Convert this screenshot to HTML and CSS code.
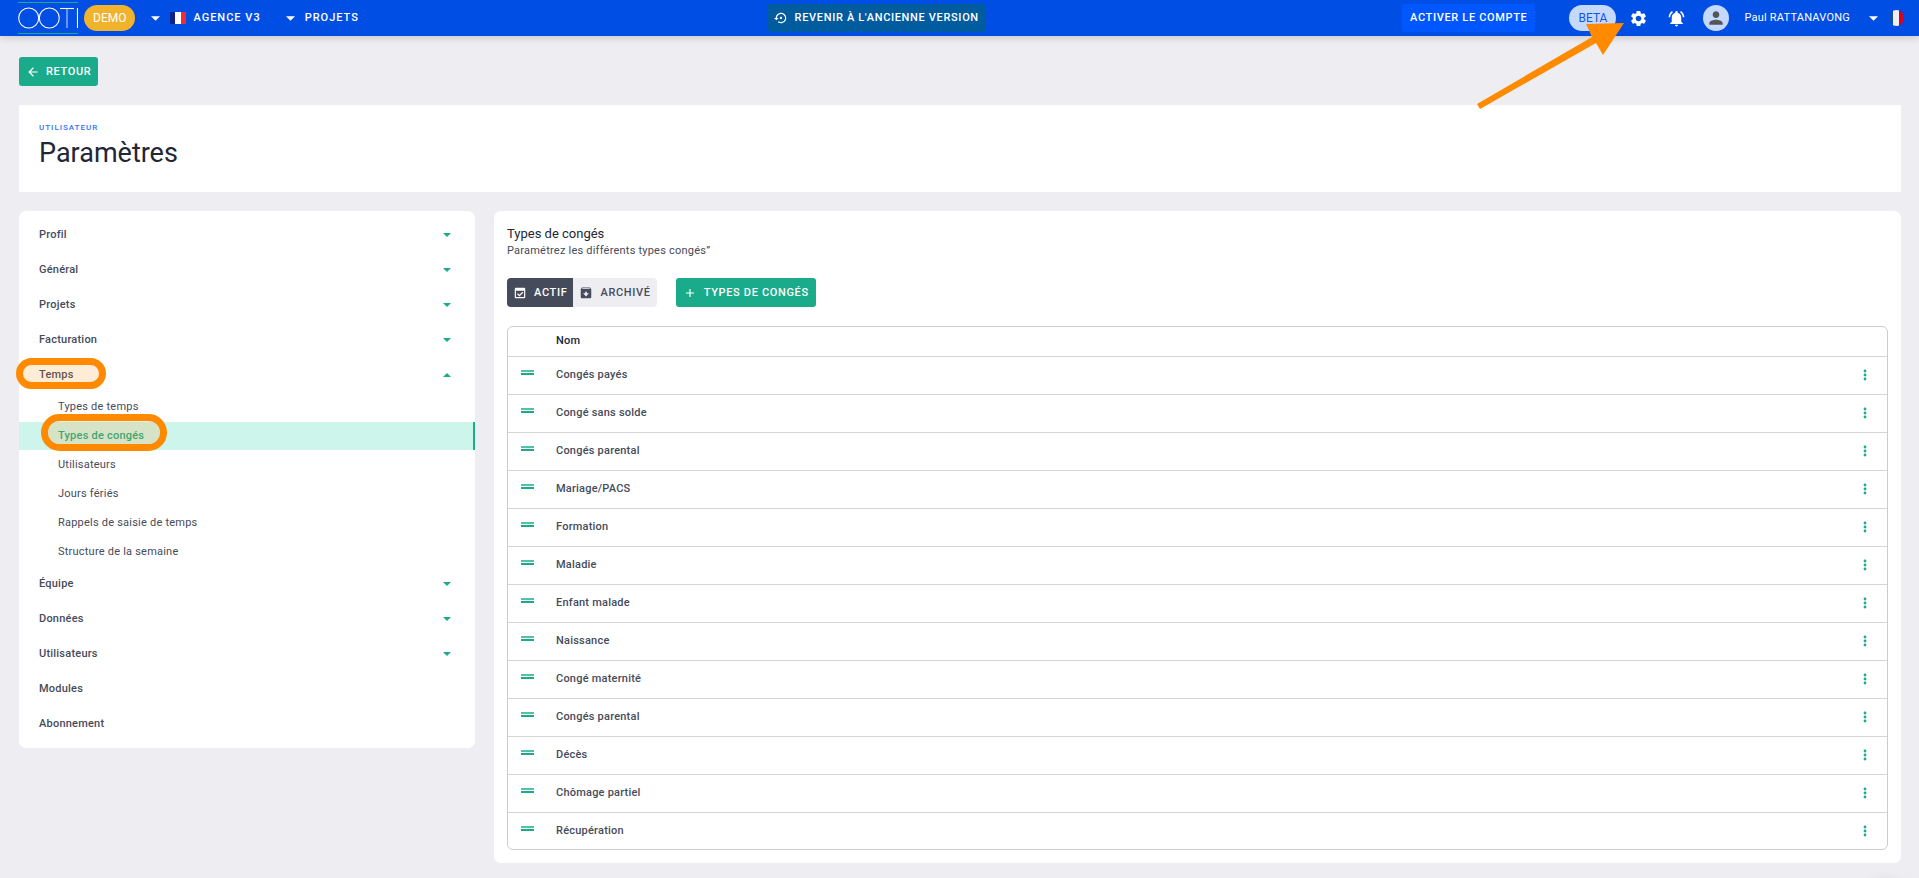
FILE: index.html
```html
<!DOCTYPE html>
<html lang="fr">
<head>
<meta charset="utf-8">
<meta name="viewport" content="width=device-width, initial-scale=1">
<title>OOTI - Paramètres</title>
<link rel="stylesheet" href="styles.css">
</head>
<body>
<svg class="sprite" aria-hidden="true">
  <symbol id="caret" viewBox="0 0 10 5"><path d="M0 0h10L5 5z"/></symbol>
  <symbol id="drag" viewBox="0 0 13 5"><path d="M0 0h13v2H0z" opacity=".75"/><path d="M0 3h13v2H0z"/></symbol>
  <symbol id="dots" viewBox="0 0 4 12"><circle cx="2" cy="2" r="1.4"/><circle cx="2" cy="6" r="1.4"/><circle cx="2" cy="10" r="1.4"/></symbol>
</svg>

<header class="topbar">
  <div class="topbar-left">
    <a href="#" class="logo" aria-label="OOTI">
      <svg width="60" height="32" viewBox="0 0 60 32" fill="none">
        <line x1="0" y1=".5" x2="60" y2=".5" stroke="#1aab8a"/>
        <line x1="0" y1="31.5" x2="60" y2="31.5" stroke="#1aab8a"/>
        <g stroke="#fff" stroke-width="1.1">
          <circle cx="10.7" cy="16" r="10"/>
          <circle cx="31.3" cy="16" r="10"/>
          <line x1="42" y1="6.5" x2="56" y2="6.5"/>
          <line x1="49" y1="6.5" x2="49" y2="26" stroke="#bcd0fa"/>
          <line x1="59.5" y1="6" x2="59.5" y2="26"/>
        </g>
      </svg>
    </a>
    <span class="pill pill-demo">DEMO</span>
    <button class="menu menu-agency" type="button">
      <svg class="caret" width="9" height="5"><use href="#caret"/></svg>
      <svg class="flag" width="16" height="12" viewBox="0 0 16 12"><path fill="#10218b" d="M0 0h5v12H0z"/><path fill="#fff" d="M5 0h6v12H5z"/><path fill="#f02c37" d="M11 0h5v12h-5z"/></svg>
      <span>AGENCE V3</span>
    </button>
    <button class="menu menu-projects" type="button">
      <svg class="caret" width="9" height="5"><use href="#caret"/></svg>
      <span>PROJETS</span>
    </button>
  </div>
  <button class="btn btn-legacy" type="button">
    <svg width="14" height="14" viewBox="0 0 24 24" fill="currentColor"><path d="M14 12c0-1.100-.9-2-2-2s-2 .9-2 2 .9 2 2 2 2-.9 2-2zm-2-9c-4.970 0-9 4.030-9 9H0l4 4 4-4H5c0-3.870 3.130-7 7-7s7 3.130 7 7-3.130 7-7 7c-1.510 0-2.910-.49-4.060-1.300l-1.420 1.440C8.040 20.300 9.940 21 12 21c4.970 0 9-4.030 9-9s-4.030-9-9-9z"/></svg>
    <span>REVENIR À L'ANCIENNE VERSION</span>
  </button>
  <div class="topbar-right">
    <button class="btn btn-activate" type="button">ACTIVER LE COMPTE</button>
    <span class="pill pill-beta">BETA</span>
    <button class="icon-btn" type="button" aria-label="Réglages">
      <svg width="19" height="19" viewBox="0 0 24 24" fill="#fff"><path d="M19.140 12.940c.04-.3.060-.61.060-.94s-.02-.64-.07-.94l2.030-1.580c.18-.14.230-.41.120-.61l-1.920-3.320c-.12-.22-.37-.29-.59-.22l-2.390.96c-.5-.38-1.030-.7-1.620-.94l-.36-2.540c-.04-.24-.24-.41-.48-.41h-3.840c-.24 0-.43.170-.47.410l-.36 2.540c-.59.240-1.130.57-1.620.94l-2.390-.96c-.22-.08-.47 0-.59.220L2.740 8.870c-.12.210-.08.470.12.610l2.030 1.580c-.05.3-.09.630-.09.940s.02.640.07.940l-2.030 1.580c-.18.140-.23.410-.12.610l1.920 3.320c.12.220.37.290.59.220l2.390-.96c.5.380 1.030.7 1.620.94l.36 2.540c.05.240.24.410.48.410h3.840c.24 0 .44-.17.470-.41l.36-2.540c.59-.24 1.130-.56 1.620-.94l2.390.96c.22.080.47 0 .59-.22l1.920-3.320c.12-.22.070-.47-.12-.61l-2.010-1.580zM12 15.600c-1.980 0-3.600-1.620-3.600-3.600s1.620-3.600 3.600-3.600 3.600 1.620 3.600 3.600-1.620 3.600-3.600 3.600z"/></svg>
    </button>
    <button class="icon-btn icon-bell" type="button" aria-label="Notifications">
      <svg width="19" height="19" viewBox="0 0 24 24" fill="#fff"><path d="M7.580 4.080L6.150 2.650C3.750 4.480 2.170 7.300 2.030 10.500h2c.15-2.650 1.510-4.970 3.550-6.420zM19.970 10.500h2c-.15-3.200-1.730-6.020-4.120-7.850l-1.420 1.430c2.020 1.450 3.390 3.770 3.540 6.420zM18 11c0-3.070-1.640-5.640-4.500-6.320V4c0-.83-.67-1.500-1.500-1.500s-1.500.67-1.500 1.500v.68C7.630 5.360 6 7.920 6 11v5l-2 2v1h16v-1l-2-2v-5zM12 22c.14 0 .27-.01.400-.04.650-.14 1.180-.58 1.440-1.180.1-.24.150-.5.150-.78h-4c.01 1.100.9 2 2.010 2z"/></svg>
    </button>
    <button class="user" type="button">
      <span class="avatar"><svg width="20" height="20" viewBox="0 0 24 24" fill="#555"><path d="M12 12c2.210 0 4-1.790 4-4s-1.790-4-4-4-4 1.790-4 4 1.790 4 4 4zm0 2c-2.670 0-8 1.340-8 4v2h16v-2c0-2.660-5.330-4-8-4z"/></svg></span>
      <span class="user-name">Paul RATTANAVONG</span>
      <svg class="caret" width="9" height="5"><use href="#caret"/></svg>
    </button>
    <button class="lang" type="button" aria-label="Français"></button>
  </div>
  <svg class="arrow" width="148" height="88" viewBox="0 0 148 88" fill="#ff8a00" aria-hidden="true"><path d="M0 82L115 15 109 2 147 1 126 33 119 21 3 87z"/></svg>
</header>

<main class="page">
  <a href="#" class="btn btn-green btn-back">
    <svg width="14" height="14" viewBox="0 0 24 24" fill="currentColor"><path d="M20 11H7.830l5.590-5.590L12 4l-8 8 8 8 1.410-1.410L7.830 13H20v-2z"/></svg>
    <span>RETOUR</span>
  </a>

  <section class="title-card">
    <p class="overline">UTILISATEUR</p>
    <h1>Paramètres</h1>
  </section>

  <div class="columns">
    <nav class="sidebar" aria-label="Paramètres">
      <button class="group" type="button">Profil<svg class="caret" width="8" height="4"><use href="#caret"/></svg></button>
      <button class="group" type="button">Général<svg class="caret" width="8" height="4"><use href="#caret"/></svg></button>
      <button class="group" type="button">Projets<svg class="caret" width="8" height="4"><use href="#caret"/></svg></button>
      <button class="group" type="button">Facturation<svg class="caret" width="8" height="4"><use href="#caret"/></svg></button>
      <button class="group" type="button" aria-expanded="true">Temps<svg class="caret caret-up" width="8" height="4"><use href="#caret"/></svg><span class="ring ring-group"></span></button>
      <div class="sub">
        <a href="#">Types de temps</a>
        <a href="#" class="active" aria-current="page">Types de congés<span class="ring ring-sub"></span></a>
        <a href="#">Utilisateurs</a>
        <a href="#">Jours fériés</a>
        <a href="#">Rappels de saisie de temps</a>
        <a href="#">Structure de la semaine</a>
      </div>
      <button class="group" type="button">Équipe<svg class="caret" width="8" height="4"><use href="#caret"/></svg></button>
      <button class="group" type="button">Données<svg class="caret" width="8" height="4"><use href="#caret"/></svg></button>
      <button class="group" type="button">Utilisateurs<svg class="caret" width="8" height="4"><use href="#caret"/></svg></button>
      <a href="#" class="group">Modules</a>
      <a href="#" class="group">Abonnement</a>
    </nav>

    <section class="panel">
      <h2>Types de congés</h2>
      <p class="hint">Paramétrez les différents types congés”</p>
      <div class="actions">
        <div class="toggle">
          <button class="btn btn-dark" type="button">
            <svg width="14" height="14" viewBox="0 0 24 24" fill="currentColor"><path fill-rule="evenodd" d="M5 3h14a2 2 0 0 1 2 2v14a2 2 0 0 1-2 2H5a2 2 0 0 1-2-2V5a2 2 0 0 1 2-2zm0 5v11h14V8zm12.500 3.500L11 18l-4-4 1.500-1.500L11 15l5-5z"/></svg>
            <span>ACTIF</span>
          </button>
          <button class="btn btn-light" type="button">
            <svg width="14" height="14" viewBox="0 0 24 24" fill="currentColor"><path fill-rule="evenodd" d="M5 2.500h14l2 3V19a2 2 0 0 1-2 2H5a2 2 0 0 1-2-2V5.500zM5 5h14l-1-1H6zm5.500 5v2.500H7l5 5.500 5-5.500h-3.500V10z"/></svg>
            <span>ARCHIVÉ</span>
          </button>
        </div>
        <button class="btn btn-green btn-add" type="button">
          <svg width="14" height="14" viewBox="0 0 24 24" fill="currentColor"><path d="M19 13h-6v6h-2v-6H5v-2h6V5h2v6h6v2z"/></svg>
          <span>TYPES DE CONGÉS</span>
        </button>
      </div>
      <table class="types">
        <thead><tr><th class="col-drag"></th><th>Nom</th><th class="col-menu"></th></tr></thead>
        <tbody id="rows"></tbody>
      </table>
    </section>
  </div>
</main>
<div class="fab-shadow" aria-hidden="true"></div>
<script src="rows.js"></script>
</body>
</html>
```
FILE: styles.css
```css
* { box-sizing: border-box; }

body {
  margin: 0;
  min-height: 100vh;
  background: #eeedf2;
  color: #464b5b;
  font: 400 11px/16px Roboto, "Liberation Sans", sans-serif;
  letter-spacing: 0.02em;
}

h1, h2, p { margin: 0; font-weight: 400; }
a { color: inherit; text-decoration: none; }
button { border: 0; padding: 0; background: none; color: inherit; font: inherit; letter-spacing: inherit; cursor: pointer; }
svg { display: block; flex: none; }
.sprite { position: absolute; width: 0; height: 0; }
.caret { fill: currentColor; }

/* Top bar */
.topbar {
  position: relative;
  display: grid;
  grid-template-columns: 40% auto 1fr;
  align-items: center;
  height: 36px;
  background: #004ee3;
  color: #fff;
  box-shadow: 0 1px 8px rgba(0, 0, 0, 0.2);
}
.topbar-left, .topbar-right { display: flex; align-items: center; }
.topbar-left { padding-left: 18px; }
.topbar-right { justify-content: flex-end; padding-right: 15px; }
.logo { height: 34px; }
.logo svg { margin-top: 1px; }
.pill {
  display: flex;
  align-items: center;
  height: 26px;
  border-radius: 13px;
  letter-spacing: 0;
}
.pill-demo { margin-left: 6px; padding: 0 9px; background: #f1b32b; font-size: 12px; }
.pill-beta { margin-left: 34px; padding: 0 9px; background: #c5d9ff; color: #0f55e6; font-size: 12px; }
.menu { display: flex; align-items: center; font-weight: 500; letter-spacing: 1px; }
.menu-agency { margin-left: 16px; }
.menu-agency .flag { margin: 0 7px 0 10px; }
.menu-projects { margin-left: 25px; }
.menu-projects .caret { margin-right: 10px; }

.btn {
  display: inline-flex;
  align-items: center;
  gap: 7px;
  height: 29px;
  border-radius: 3px;
  font-size: 11px;
  font-weight: 500;
  letter-spacing: 0.06em;
  white-space: nowrap;
}
.btn-legacy { height: 28px; padding: 0 7px 0 6px; background: #005b9f; }
.btn-activate { height: 28px; padding: 0 8px; background: #0056ff; }
.icon-btn { margin-left: 13px; }
.icon-bell { margin-left: 19px; }
.user { display: flex; align-items: center; margin-left: 17px; }
.avatar {
  display: grid;
  place-items: center;
  width: 26px;
  height: 26px;
  border-radius: 50%;
  background: #c5d9ff;
}
.user-name { margin: 0 19px 0 15px; }
.lang {
  width: 15px;
  height: 16px;
  margin-left: 11px;
  border-radius: 50%;
  background: linear-gradient(90deg, #1450a8 0 4px, #f0f0f0 4px 10px, #d80027 10px);
}
.arrow { position: absolute; top: 22px; right: 294px; z-index: 2; pointer-events: none; }

/* Page */
.page { padding: 21px 18px 15px 19px; }
.btn-green { background: #1aab8a; color: #fff; }
.btn-back, .btn-add { padding: 0 7px; }
.btn-back { gap: 6px; }
.title-card { margin-top: 19px; padding: 16px 20px 21px; background: #fff; }
.overline { color: #2f74ff; font-size: 8px; font-weight: 500; line-height: 14px; letter-spacing: 1px; }
h1 { color: #232634; font-size: 27px; line-height: 36px; letter-spacing: 0; }

.columns {
  display: grid;
  grid-template-columns: 456fr 1407fr;
  gap: 19px;
  align-items: start;
  margin-top: 19px;
}
.sidebar, .panel { background: #fff; border-radius: 7px; }

/* Settings navigation */
.sidebar { padding: 6px 0 7px; }
.group {
  position: relative;
  display: flex;
  align-items: center;
  justify-content: space-between;
  width: 100%;
  height: 35px;
  padding: 0 24px 0 20px;
  font-weight: 500;
}
.group .caret { color: #1aab8a; }
.caret-up { transform: rotate(180deg); }
.sub { display: grid; gap: 1px; padding-top: 1px; }
.sub a { position: relative; display: flex; align-items: center; height: 28px; padding-left: 39px; }
.sub .active {
  background: #cef5ec;
  border-right: 2px solid #1aab8a;
  color: #1aab8a;
  font-weight: 500;
}
.ring {
  position: absolute;
  z-index: 1;
  border: 7px solid #ff8a00;
  border-radius: 20px;
  background: rgba(255, 138, 0, 0.16);
  background-clip: padding-box;
  pointer-events: none;
}
.ring-group { left: -3px; top: 1px; width: 90px; height: 31px; }
.ring-sub { left: 22px; top: -8px; width: 126px; height: 37px; }

/* Leave types */
.panel { padding: 14px 13px 13px; }
h2 { color: #232634; font-size: 13px; line-height: 17px; letter-spacing: 0; }
.hint { line-height: 17px; }
.actions { display: flex; gap: 19px; margin: 19px 0; }
.toggle { display: flex; overflow: hidden; border-radius: 4px; background: #eeedf2; }
.toggle .btn { border-radius: 0; padding: 0 6px; }
.btn-dark { background: #464b5b; color: #fff; }

.types {
  width: 100%;
  border: 1px solid #ccc;
  border-radius: 6px;
  border-spacing: 0;
}
.types th, .types td { padding: 0; text-align: left; font-weight: 500; }
.types th { height: 29px; color: #232634; padding-bottom: 2px; }
.types td { height: 38px; padding-bottom: 1px; border-top: 1px solid #d5d5d5; }
.types tr:last-child td { height: 37px; }
.types .col-drag { width: 48px; padding: 0 0 6px 13px; }
.types .col-menu { width: 24px; }
.types button { display: block; color: #1aab8a; fill: currentColor; }

.fab-shadow {
  position: fixed;
  right: 8px;
  bottom: -54px;
  width: 48px;
  height: 48px;
  border-radius: 50%;
  box-shadow: 0 0 14px rgba(0, 0, 0, 0.2);
}
```
FILE: rows.js
```js
const names = [
  "Congés payés", "Congé sans solde", "Congés parental", "Mariage/PACS", "Formation",
  "Maladie", "Enfant malade", "Naissance", "Congé maternité", "Congés parental",
  "Décès", "Chômage partiel", "Récupération"
];
document.getElementById("rows").innerHTML = names.map(name => `
  <tr>
    <td class="col-drag"><button type="button" aria-label="Déplacer"><svg width="13" height="5"><use href="#drag"/></svg></button></td>
    <td>${name}</td>
    <td class="col-menu"><button type="button" aria-label="Options"><svg width="4" height="12"><use href="#dots"/></svg></button></td>
  </tr>`).join("");
```
